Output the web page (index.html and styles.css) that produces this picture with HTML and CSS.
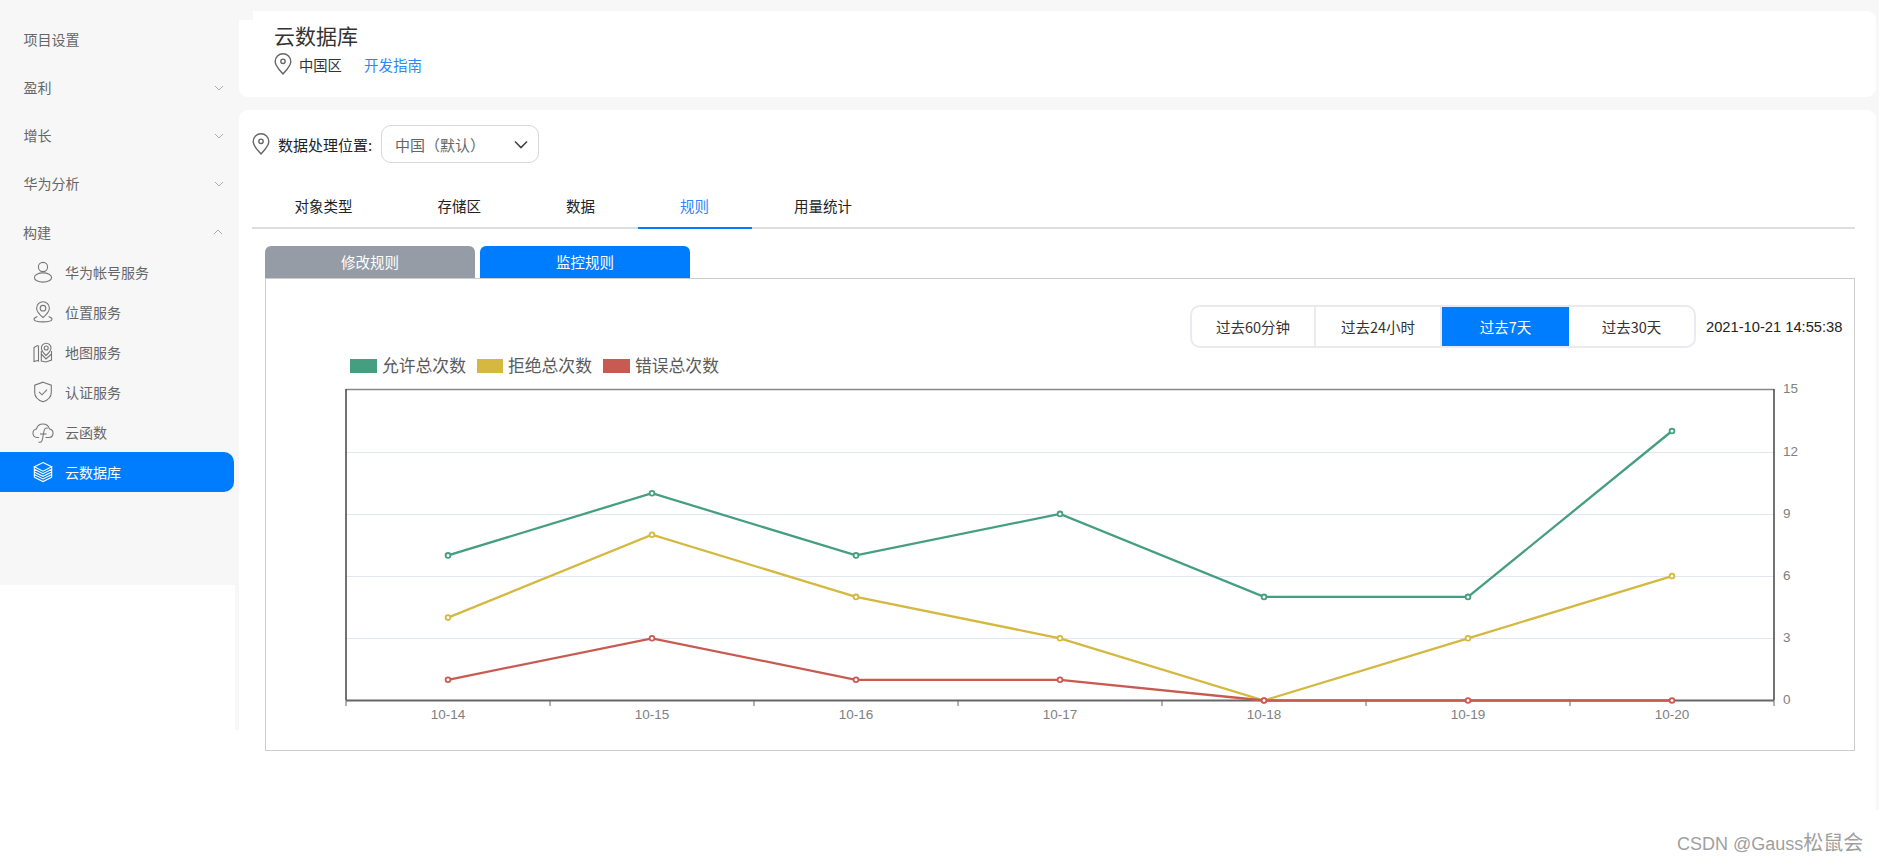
FILE: index.html
```html
<!DOCTYPE html>
<html lang="zh-CN">
<head>
<meta charset="utf-8">
<title>云数据库</title>
<link rel="stylesheet" href="styles.css">
</head>
<body>
<div class="app">
  <aside class="aside">
    <nav class="side-nav">
      <div class="nav-row">项目设置</div>
      <div class="nav-row">盈利<svg class="chev" viewBox="0 0 10 6"><path d="M1 1l4 4 4-4"/></svg></div>
      <div class="nav-row">增长<svg class="chev" viewBox="0 0 10 6"><path d="M1 1l4 4 4-4"/></svg></div>
      <div class="nav-row">华为分析<svg class="chev" viewBox="0 0 10 6"><path d="M1 1l4 4 4-4"/></svg></div>
      <div class="nav-row nav-open">构建<svg class="chev" viewBox="0 0 10 6"><path d="M1 5l4-4 4 4"/></svg></div>
      <div class="nav-item">
        <svg class="ico" viewBox="0 0 20 22"><circle cx="10" cy="6" r="4.600"/><ellipse cx="10" cy="16.500" rx="8.600" ry="4.600"/></svg>华为帐号服务
      </div>
      <div class="nav-item">
        <svg class="ico" viewBox="0 0 20 22"><path d="M10 16.500C6.500 13.500 3.600 10.600 3.600 7.200a6.400 6.400 0 0 1 12.800 0c0 3.400-2.900 6.300-6.400 9.300z"/><circle cx="10" cy="7.200" r="2.800"/><path d="M4.400 15.600C2.400 16.400 1 17.200 1 18.300c0 1.500 4 2.600 9 2.600s9-1.100 9-2.600c0-1.100-1.400-1.900-3.400-2.700"/></svg>位置服务
      </div>
      <div class="nav-item">
        <svg class="ico" viewBox="0 0 20 22"><path d="M1 6.500l3.500-2 1 .5v15l-1-.5-3.500 1z"/><path d="M13 14.500C10.500 12.200 8.400 10 8.400 7.100a4.800 4.800 0 0 1 9.600 0c0 2.900-2.500 5.100-5 7.400z"/><circle cx="13.200" cy="7" r="2"/><path d="M8.300 10v10l4.700 1 5.500-2V10"/><path d="M8.300 13l4.700 5 5.500-5"/></svg>地图服务
      </div>
      <div class="nav-item">
        <svg class="ico" viewBox="0 0 20 22"><path d="M10 1.200l8.300 3v7c0 4.600-3.300 7.900-8.300 9.600-5-1.700-8.300-5-8.300-9.600v-7z"/><path d="M6 10.800l3 3 5-5.200"/></svg>认证服务
      </div>
      <div class="nav-item">
        <svg class="ico ico-wide" viewBox="0 0 22 22"><path d="M7 16.500H5a4.300 4.300 0 0 1-.6-8.500A6.800 6.800 0 0 1 17.500 8a4.300 4.300 0 0 1-.3 8.500H13.500"/><path d="M6.500 21c2.300.9 3.500-.3 4-3l1.500-8c.5-2.600 1.700-3.500 3.800-2.800"/><path d="M8 13h6.500"/></svg>云函数
      </div>
      <div class="nav-item nav-active">
        <svg class="ico ico-white" viewBox="0 0 20 22"><path d="M10 1.500l8.700 4.300L10 10.200 1.300 5.800z"/><path d="M1.300 8.300L10 12.700l8.700-4.400M1.300 11L10 15.300 18.700 11M1.300 13.600L10 18l8.700-4.400M1.300 16.200L10 20.600l8.700-4.400M1.300 5.800v10.400M18.700 5.800v10.400"/></svg>云数据库
      </div>
    </nav>
    <div class="side-rail"></div>
  </aside>

  <main class="main">
    <section class="card head-card">
      <h1 class="title">云数据库</h1>
      <div class="head-meta">
        <svg class="pin" viewBox="0 0 18 22"><path d="M9 21C5 16.500 1.200 12.800 1.200 8.500a7.800 7.800 0 0 1 15.600 0C16.800 12.800 13 16.500 9 21z"/><circle cx="9" cy="8.300" r="2.200"/></svg>
        <span class="region">中国区</span>
        <a class="guide">开发指南</a>
      </div>
    </section>

    <section class="card body-card">
      <div class="loc-row">
        <svg class="pin" viewBox="0 0 18 22"><path d="M9 21C5 16.500 1.200 12.800 1.200 8.500a7.800 7.800 0 0 1 15.600 0C16.800 12.800 13 16.500 9 21z"/><circle cx="9" cy="8.300" r="2.200"/></svg>
        <span class="loc-label">数据处理位置:</span>
        <div class="select">
          <span>中国（默认）</span>
          <svg class="select-arrow" viewBox="0 0 14 9"><path d="M1 1.500l6 6 6-6"/></svg>
        </div>
      </div>

      <div class="tabs">
        <div class="tab">对象类型</div>
        <div class="tab">存储区</div>
        <div class="tab">数据</div>
        <div class="tab tab-active">规则</div>
        <div class="tab">用量统计</div>
      </div>

      <div class="subtabs">
        <div class="subtab">修改规则</div>
        <div class="subtab subtab-active">监控规则</div>
      </div>

      <div class="panel">
        <div class="range-row">
          <div class="range">
            <div class="range-btn range-a">过去60分钟</div>
            <div class="range-btn range-b">过去24小时</div>
            <div class="range-btn range-on">过去7天</div>
            <div class="range-btn range-d">过去30天</div>
          </div>
          <div class="stamp">2021-10-21 14:55:38</div>
        </div>

        <svg class="chart" viewBox="266 348 1588 402">
          <rect class="lg-green" x="350" y="359" width="27" height="14"/>
          <text class="lg-text" x="382" y="372">允许总次数</text>
          <rect class="lg-yellow" x="477" y="359" width="26" height="14"/>
          <text class="lg-text" x="508" y="372">拒绝总次数</text>
          <rect class="lg-red" x="603" y="359" width="27" height="14"/>
          <text class="lg-text" x="635" y="372">错误总次数</text>

          <path class="grid" d="M346 452.500H1774M346 514.500H1774M346 576.500H1774M346 638.500H1774"/>
          <path class="axis-top" d="M346 389.500H1774"/>
          <path class="axis" d="M346 389V700M1774 389V700"/>
          <path class="axis-x" d="M346 700.500H1774"/>
          <path class="tick" d="M346 700v6M550 700v6M754 700v6M958 700v6M1162 700v6M1366 700v6M1570 700v6M1774 700v6"/>

          <text class="label" x="1783" y="393">15</text>
          <text class="label" x="1783" y="456">12</text>
          <text class="label" x="1783" y="518">9</text>
          <text class="label" x="1783" y="580">6</text>
          <text class="label" x="1783" y="642">3</text>
          <text class="label" x="1783" y="704">0</text>

          <text class="label lab-x" x="448" y="719">10-14</text>
          <text class="label lab-x" x="652" y="719">10-15</text>
          <text class="label lab-x" x="856" y="719">10-16</text>
          <text class="label lab-x" x="1060" y="719">10-17</text>
          <text class="label lab-x" x="1264" y="719">10-18</text>
          <text class="label lab-x" x="1468" y="719">10-19</text>
          <text class="label lab-x" x="1672" y="719">10-20</text>

          <g class="s-green">
            <polyline points="448,555.400 652,493.200 856,555.400 1060,513.900 1264,596.900 1468,596.900 1672,431"/>
            <circle cx="448" cy="555.400" r="2.400"/><circle cx="652" cy="493.200" r="2.400"/><circle cx="856" cy="555.400" r="2.400"/><circle cx="1060" cy="513.900" r="2.400"/><circle cx="1264" cy="596.900" r="2.400"/><circle cx="1468" cy="596.900" r="2.400"/><circle cx="1672" cy="431" r="2.400"/>
          </g>
          <g class="s-yellow">
            <polyline points="448,617.600 652,534.700 856,596.900 1060,638.300 1264,700.500 1468,638.300 1672,576.100"/>
            <circle cx="448" cy="617.600" r="2.400"/><circle cx="652" cy="534.700" r="2.400"/><circle cx="856" cy="596.900" r="2.400"/><circle cx="1060" cy="638.300" r="2.400"/><circle cx="1264" cy="700.500" r="2.400"/><circle cx="1468" cy="638.300" r="2.400"/><circle cx="1672" cy="576.100" r="2.400"/>
          </g>
          <g class="s-red">
            <polyline points="448,679.800 652,638.300 856,679.800 1060,679.800 1264,700.500 1468,700.500 1672,700.500"/>
            <circle cx="448" cy="679.800" r="2.400"/><circle cx="652" cy="638.300" r="2.400"/><circle cx="856" cy="679.800" r="2.400"/><circle cx="1060" cy="679.800" r="2.400"/><circle cx="1264" cy="700.500" r="2.400"/><circle cx="1468" cy="700.500" r="2.400"/><circle cx="1672" cy="700.500" r="2.400"/>
          </g>
        </svg>
      </div>
    </section>
  </main>
</div>
<div class="watermark">CSDN @Gauss<span class="wm-cjk">松鼠会</span></div>
</body>
</html>
```

FILE: styles.css
```css
* { box-sizing: border-box; }
html, body { margin: 0; padding: 0; }
body {
  position: relative;
  width: 1879px;
  height: 862px;
  overflow: hidden;
  background: #fff;
  color: #222;
  font-family: "Noto Sans CJK SC", "Liberation Sans", sans-serif;
  font-size: 14px;
}
.app { display: flex; align-items: flex-start; }

.aside { width: 239px; flex: none; }
.side-nav {
  height: 585px;
  padding-top: 20px;
  background: #f7f7f7;
  color: #666;
}
.side-rail {
  width: 4px;
  height: 145px;
  margin-left: 235px;
  background: #f7f7f7;
}
.nav-row {
  display: flex;
  align-items: center;
  justify-content: space-between;
  height: 40px;
  margin-bottom: 8px;
  padding: 0 15px 2px 23.500px;
  line-height: 1;
}
.nav-open { margin: 1px 0 0; padding: 0 16px 0 23px; }
.chev { width: 10px; height: 6px; margin-top: 2px; fill: none; stroke: #aaa; stroke-width: 1; }
.nav-open .chev { margin-top: 0; }
.nav-item {
  display: flex;
  align-items: center;
  gap: 12px;
  width: 234px;
  height: 40px;
  padding-left: 33px;
  line-height: 1;
}
.ico {
  width: 20px;
  height: 22px;
  flex: none;
  fill: none;
  stroke: #777;
  stroke-width: 1.100;
}
.ico-wide { width: 22px; margin: 0 -1px; }
.nav-active {
  background: #007dff;
  color: #fff;
  border-radius: 0 10px 10px 0;
}
.ico-white { stroke: #fff; }

.main {
  flex: 1;
  height: 810px;
  padding: 11px 3px 0 0;
  background: #f7f7f7;
}
.card { position: relative; background: #fff; border-radius: 9px; }
.head-card {
  height: 86px;
  margin-bottom: 13px;
  padding: 11px 0 0 35px;
}
.head-card::before {
  content: "";
  position: absolute;
  left: 0;
  top: 0;
  width: 14px;
  height: 9px;
  background: #f7f7f7;
}
.title {
  margin: 0;
  font-size: 21px;
  font-weight: 400;
  line-height: 26px;
  color: #333;
}
.head-meta {
  display: flex;
  align-items: center;
  height: 28px;
  margin-top: 2px;
}
.pin {
  width: 18px;
  height: 22px;
  flex: none;
  fill: none;
  stroke: #666;
  stroke-width: 1.400;
}
.region { margin-left: 7px; font-size: 14.300px; color: #333; }
.guide { margin-left: 22px; font-size: 14.500px; color: #2b86ff; }

.body-card { height: 700px; padding: 15px 21px 0 13px; border-radius: 9px 9px 0 0; }
.loc-row { display: flex; align-items: center; height: 38px; }
.loc-label { margin-left: 8px; width: 103px; font-size: 15px; white-space: nowrap; color: #222; }
.select {
  display: flex;
  align-items: center;
  justify-content: space-between;
  width: 158px;
  height: 38px;
  padding: 0 10px 0 13px;
  border: 1px solid #d9d9d9;
  border-radius: 10px;
  font-size: 15px;
  color: #666;
}
.select-arrow { width: 14px; height: 9px; fill: none; stroke: #444; stroke-width: 1.600; }

.tabs {
  display: flex;
  height: 66px;
  border-bottom: 2px solid #dedede;
}
.tab {
  display: flex;
  align-items: flex-end;
  padding: 0 42.500px 11px;
  font-size: 14.500px;
  line-height: 21px;
  color: #222;
}
.tab-active {
  margin-bottom: -2px;
  border-bottom: 2px solid #007dff;
  color: #2b86ff;
}
.subtabs {
  display: flex;
  gap: 5px;
  margin: 17px 0 0 13px;
}
.subtab {
  width: 210px;
  height: 32px;
  line-height: 32px;
  text-align: center;
  font-size: 14.500px;
  background: #969ca6;
  color: #fff;
  border-radius: 6px 6px 0 0;
}
.subtab-active { background: #007dff; }
.panel {
  width: 1590px;
  height: 473px;
  margin-left: 13px;
  padding-top: 26px;
  border: 1px solid #ccc;
}
.range-row {
  display: flex;
  align-items: center;
  height: 43px;
  padding-left: 924px;
}
.range {
  display: flex;
  width: 506px;
  height: 43px;
  border: 2px solid #eaeaf0;
  border-radius: 10px;
  overflow: hidden;
}
.range-btn {
  line-height: 39px;
  text-align: center;
  font-size: 14.500px;
  color: #333;
  border-right: 2px solid #eaeaf0;
}
.range-a { width: 124px; }
.range-b { width: 126px; }
.range-d { flex: 1; border-right: 0; }
.range-on {
  width: 127px;
  margin: -2px 0;
  line-height: 43px;
  background: #007dff;
  color: #fff;
  border-right: 0;
}
.stamp {
  margin-left: 10px;
  font-family: "Liberation Sans", sans-serif;
  font-size: 14.700px;
  white-space: nowrap;
  color: #222;
}
.chart { display: block; width: 1588px; height: 402px; }

.lg-green { fill: #459e80; }
.lg-yellow { fill: #d4b83f; }
.lg-red { fill: #c85a52; }
.lg-text { font-size: 16.800px; fill: #5a5a5a; }
.grid { fill: none; stroke: #e2e6ef; stroke-width: 1; }
.axis-top { fill: none; stroke: #888; stroke-width: 1.500; }
.axis { fill: none; stroke: #444; stroke-width: 1.500; }
.axis-x { fill: none; stroke: #666; stroke-width: 2; }
.tick { fill: none; stroke: #666; stroke-width: 1; }
.label { font-family: "Liberation Sans", sans-serif; font-size: 13.500px; fill: #808080; }
.lab-x { text-anchor: middle; }
.s-green, .s-yellow, .s-red { stroke-width: 2.300; }
.s-green polyline, .s-yellow polyline, .s-red polyline { fill: none; }
.s-green circle, .s-yellow circle, .s-red circle { fill: #fff; stroke-width: 1.800; }
.s-green { stroke: #459e80; }
.s-yellow { stroke: #d4b83f; }
.s-red { stroke: #c85a52; }

.watermark {
  position: absolute;
  left: 1677px;
  top: 828px;
  font-family: "Liberation Sans", sans-serif;
  font-size: 18px;
  line-height: 28px;
  color: #a0a0a0;
  white-space: nowrap;
}
.wm-cjk { font-family: "Noto Sans CJK SC", sans-serif; font-size: 20px; }
```
